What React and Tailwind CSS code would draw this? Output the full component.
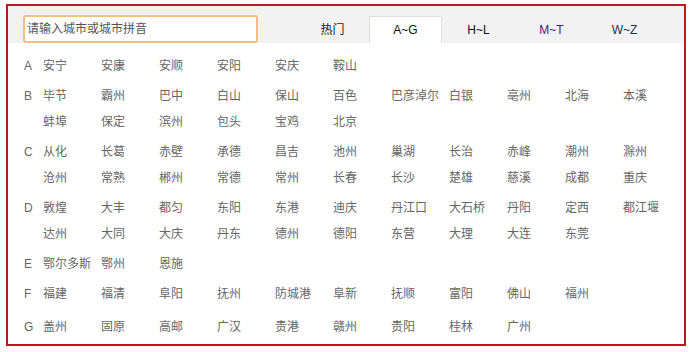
import React from 'react';

const groups = [
  { letter: 'A', cities: ['安宁', '安康', '安顺', '安阳', '安庆', '鞍山'] },
  {
    letter: 'B',
    cities: ['毕节', '霸州', '巴中', '白山', '保山', '百色', '巴彦淖尔', '白银', '亳州', '北海', '本溪', '蚌埠', '保定', '滨州', '包头', '宝鸡', '北京'],
  },
  {
    letter: 'C',
    cities: ['从化', '长葛', '赤壁', '承德', '昌吉', '池州', '巢湖', '长治', '赤峰', '潮州', '滁州', '沧州', '常熟', '郴州', '常德', '常州', '长春', '长沙', '楚雄', '慈溪', '成都', '重庆'],
  },
  {
    letter: 'D',
    cities: ['敦煌', '大丰', '都匀', '东阳', '东港', '迪庆', '丹江口', '大石桥', '丹阳', '定西', '都江堰', '达州', '大同', '大庆', '丹东', '德州', '德阳', '东营', '大理', '大连', '东莞'],
  },
  { letter: 'E', cities: ['鄂尔多斯', '鄂州', '恩施'] },
  { letter: 'F', cities: ['福建', '福清', '阜阳', '抚州', '防城港', '阜新', '抚顺', '富阳', '佛山', '福州'] },
  { letter: 'G', cities: ['盖州', '固原', '高邮', '广汉', '贵港', '赣州', '贵阳', '桂林', '广州'], extra: 'mt-[3px]' },
];

const tabs = [
  { label: '热门', color: 'text-[#222]' },
  { label: 'A~G', color: 'text-[#111]', active: true },
  { label: 'H~L', color: 'text-[#111]' },
  { label: 'M~T', color: 'text-[#4a1a7a]' },
  { label: 'W~Z', color: 'text-[#2a2f4a]' },
];

const App = () => {
  return (
    <div className="w-[696px] h-[352px] bg-white pt-[4px] pl-[6px] font-['Liberation_Sans','Noto_Sans_CJK_SC',sans-serif] text-[12px]">
      <div className="w-[680px] h-[342px] border-2 border-[#c0161d] flex flex-col">
        {/* header: search + tabs */}
        <div className="h-[37px] bg-[#f2f2f2] flex items-end">
          <div className="ml-[15px] w-[235px] h-[28px] border-2 border-[#efc27a] rounded-[3px] bg-white flex items-center px-[2px] text-[#555]">
            请输入城市或城市拼音
          </div>
          <div className="ml-[38px] flex items-end">
            {tabs.map((t) => (
              <div
                key={t.label}
                className={
                  t.active
                    ? `w-[73px] h-[27px] bg-white border border-b-0 border-[#e6dcdc] flex items-center justify-center ${t.color}`
                    : `w-[73px] h-[27px] flex items-center justify-center ${t.color}`
                }
              >
                {t.label}
              </div>
            ))}
          </div>
        </div>

        {/* city list */}
        <div className="pt-[10px] pl-[16px] flex flex-col gap-[4px] text-[#666]">
          {groups.map((g) => (
            <div key={g.letter} className={`flex ${g.extra || ''}`}>
              <div className="w-[19px] h-[26px] leading-[26px]">{g.letter}</div>
              <div className="grid grid-cols-[repeat(11,58px)] auto-rows-[26px]">
                {g.cities.map((c) => (
                  <span key={c} className="leading-[26px] whitespace-nowrap">
                    {c}
                  </span>
                ))}
              </div>
            </div>
          ))}
        </div>
      </div>
    </div>
  );
};

export default App;
